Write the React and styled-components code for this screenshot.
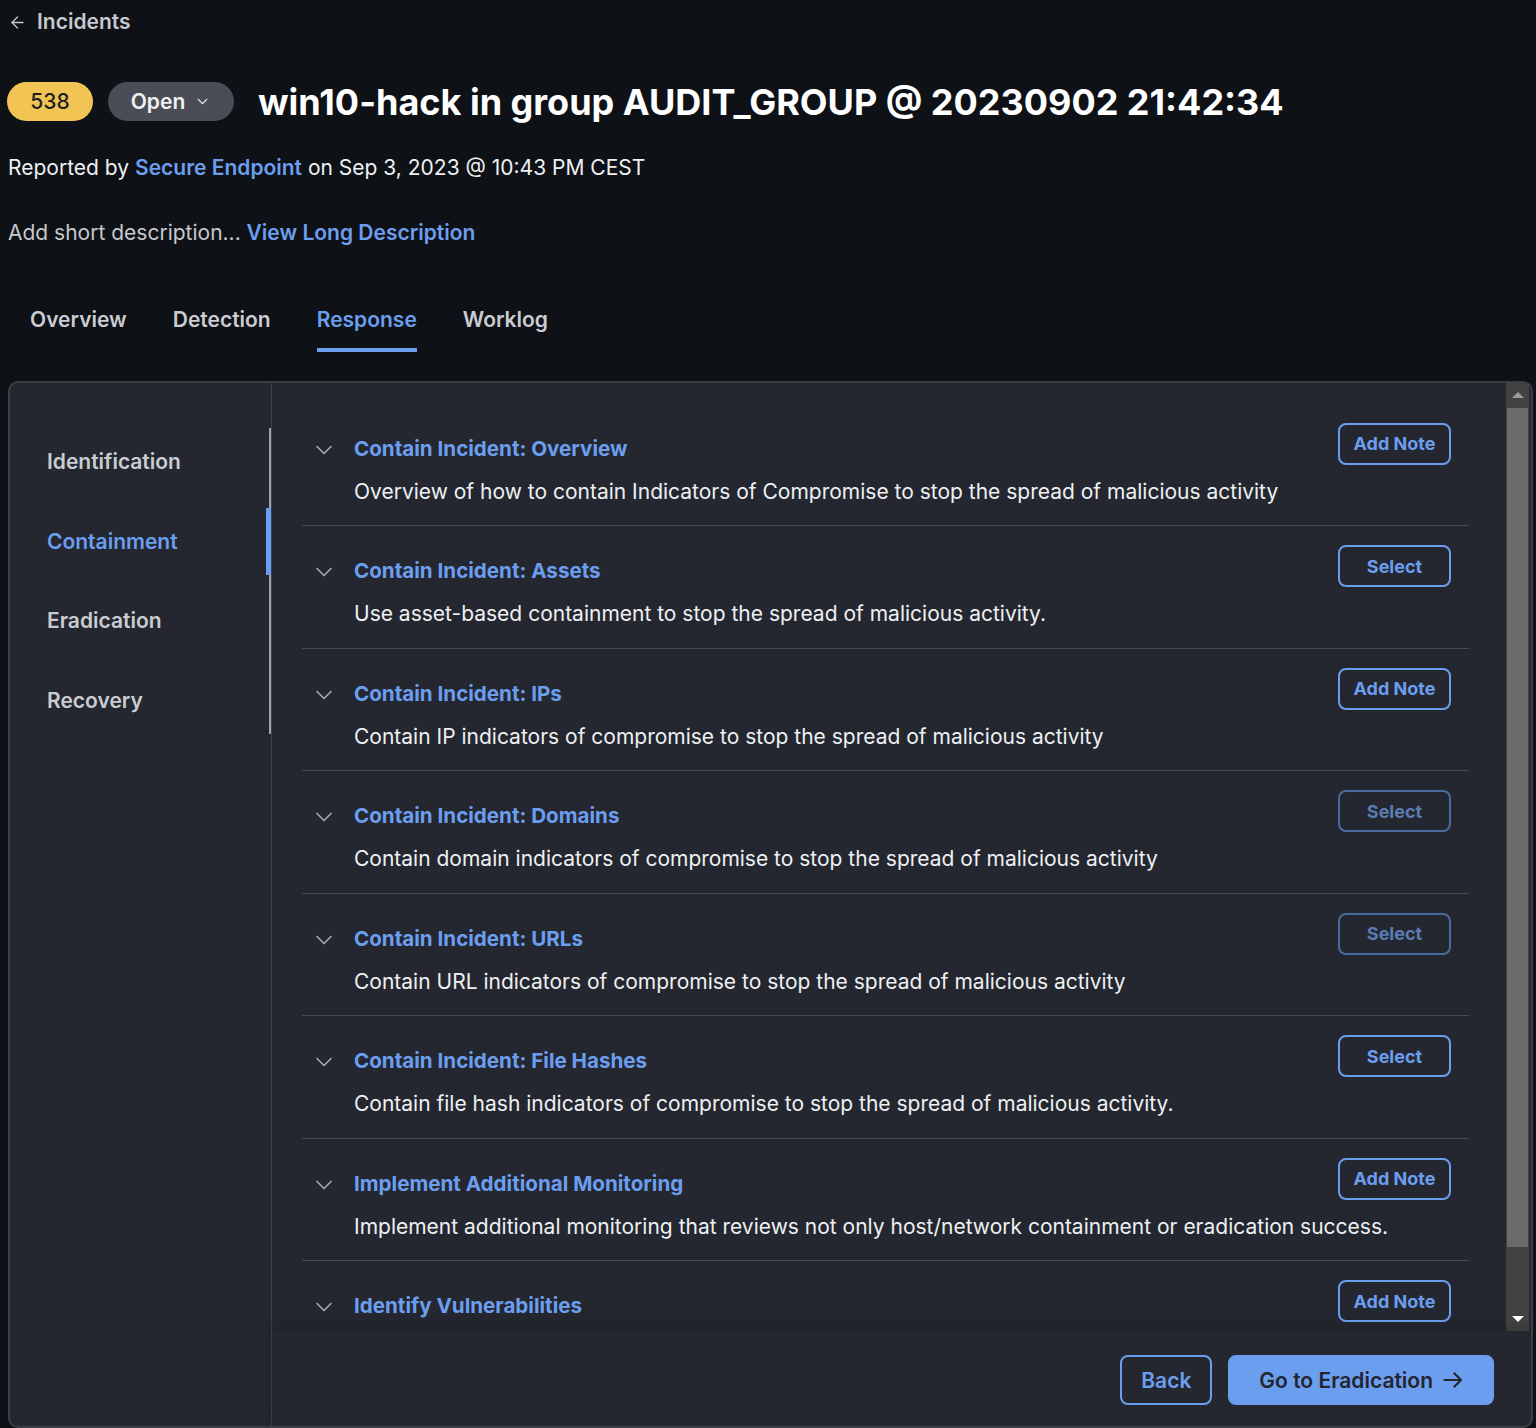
import React from 'react';
import styled, { createGlobalStyle } from 'styled-components';
import { ArrowLeft, ChevronDown } from 'lucide-react';

const GlobalStyle = createGlobalStyle`
    * { box-sizing: border-box; }
    html, body {
        margin: 0;
        background: #0e1115;
        font-family: Inter, "Noto Sans", sans-serif;
        color: #eef0f3;
    }
`;

const steps = [
    {
        title: 'Contain Incident: Overview',
        text: 'Overview of how to contain Indicators of Compromise to stop the spread of malicious activity',
        action: 'Add Note',
    },
    {
        title: 'Contain Incident: Assets',
        text: 'Use asset-based containment to stop the spread of malicious activity.',
        action: 'Select',
    },
    {
        title: 'Contain Incident: IPs',
        text: 'Contain IP indicators of compromise to stop the spread of malicious activity',
        action: 'Add Note',
    },
    {
        title: 'Contain Incident: Domains',
        text: 'Contain domain indicators of compromise to stop the spread of malicious activity',
        action: 'Select',
        disabled: true,
    },
    {
        title: 'Contain Incident: URLs',
        text: 'Contain URL indicators of compromise to stop the spread of malicious activity',
        action: 'Select',
        disabled: true,
    },
    {
        title: 'Contain Incident: File Hashes',
        text: 'Contain file hash indicators of compromise to stop the spread of malicious activity.',
        action: 'Select',
    },
    {
        title: 'Implement Additional Monitoring',
        text: 'Implement additional monitoring that reviews not only host/network containment or eradication success.',
        action: 'Add Note',
    },
    {
        title: 'Identify Vulnerabilities',
        text: 'Identify vulnerabilities that were exploited during the incident.',
        action: 'Add Note',
    },
];

const phases = ['Identification', 'Containment', 'Eradication', 'Recovery'];
const tabs = ['Overview', 'Detection', 'Response', 'Worklog'];

const Page = styled.div`
    padding: 8px 3px 0 8px;
`;

const BackLink = styled.a`
    display: inline-flex;
    align-items: center;
    gap: 10px;
    color: #c6c9ce;
    font-size: 21px;
    font-weight: 600;
    line-height: 28px;
    text-decoration: none;
    svg { color: #c6c9ce; }
`;

const HeadRow = styled.div`
    display: flex;
    align-items: center;
    margin-top: 46px;
    height: 39px;
`;

const Badge = styled.span`
    display: inline-flex;
    align-items: center;
    justify-content: center;
    height: 39px;
    width: 86px;
    margin-left: -1px;
    border-radius: 20px;
    background: #f1c453;
    color: #1f1f1f;
    font-size: 21px;
    font-weight: 500;
`;

const StatusPill = styled.button`
    display: inline-flex;
    align-items: center;
    justify-content: center;
    gap: 9px;
    height: 39px;
    width: 126px;
    margin-left: 15px;
    border: none;
    border-radius: 20px;
    background: #4a4d55;
    color: #eef0f3;
    font-family: inherit;
    font-size: 21px;
    font-weight: 600;
`;

const Title = styled.h1`
    margin: 0 0 0 24px;
    font-size: 36px;
    font-weight: 700;
    line-height: 44px;
    color: #ffffff;
`;

const Reported = styled.p`
    margin: 33px 0 0;
    font-size: 21px;
    line-height: 28px;
    color: #eef0f3;
`;

const Link = styled.a`
    color: #6c9ef0;
    font-weight: 600;
    text-decoration: none;
`;

const ShortDesc = styled.p`
    margin: 37px 0 0;
    font-size: 21px;
    line-height: 28px;
    color: #c6c9ce;
`;

const Tabs = styled.nav`
    display: flex;
    gap: 46px;
    margin-top: 59px;
    padding-left: 22px;
`;

const Tab = styled.span`
    font-size: 21px;
    font-weight: 600;
    line-height: 28px;
    padding-bottom: 14px;
    color: ${(p) => (p.$active ? '#6c9ef0' : '#c9ccd1')};
    border-bottom: 4px solid ${(p) => (p.$active ? '#6c9ef0' : 'transparent')};
`;

const Panel = styled.section`
    display: flex;
    margin-top: 29px;
    height: 1047px;
    background: #24272f;
    border: 2px solid #3b3e45;
    border-radius: 10px;
    overflow: hidden;
`;

const Sidebar = styled.aside`
    width: 261px;
    flex: none;
    padding-top: 45px;
`;

const PhaseNav = styled.ul`
    list-style: none;
    margin: 0;
    padding: 0;
    display: flex;
    flex-direction: column;
    gap: 12.7px;
    border-right: 2px solid #9ea2a9;
`;

const Phase = styled.li`
    position: relative;
    height: 67px;
    display: flex;
    align-items: center;
    padding-left: 37px;
    font-size: 21px;
    font-weight: 600;
    color: ${(p) => (p.$active ? '#6c9ef0' : '#c9ccd1')};
    &::after {
        content: '';
        display: ${(p) => (p.$active ? 'block' : 'none')};
        position: absolute;
        top: 0;
        bottom: 0;
        right: -2px;
        width: 5px;
        background: #6c9ef0;
    }
`;

const Main = styled.div`
    flex: 1;
    display: flex;
    flex-direction: column;
    border-left: 1px solid #3d4048;
    min-width: 0;
`;

const ScrollArea = styled.div`
    display: flex;
    height: 948px;
    flex: none;
`;

const StepList = styled.div`
    flex: 1;
    overflow: hidden;
    padding: 20.5px 37px 0 30px;
`;

const Step = styled.div`
    display: grid;
    grid-template-columns: 52px 1fr;
    padding: 19px 18px 19.5px 0;
    border-bottom: 1px solid #474a52;
`;

const Chevron = styled(ChevronDown)`
    margin: 13px 0 0 8px;
    color: #a3a7ae;
`;

const StepHead = styled.div`
    display: flex;
    justify-content: space-between;
    align-items: flex-start;
`;

const StepTitle = styled.h3`
    margin: 12px 0 0;
    font-size: 20.6px;
    font-weight: 700;
    line-height: 28px;
    color: #6c9ef0;
`;

const StepText = styled.p`
    grid-column: 2;
    margin: 13px 0 0;
    font-size: 21px;
    line-height: 28px;
    color: #eef0f3;
`;

const OutlineButton = styled.button`
    height: 42px;
    width: 113px;
    border: 2px solid ${(p) => (p.disabled ? '#4a6b9f' : '#6c9ef0')};
    border-radius: 8px;
    background: transparent;
    color: ${(p) => (p.disabled ? '#5a7cb3' : '#6c9ef0')};
    font-family: inherit;
    font-size: 18px;
    font-weight: 700;
`;

const ScrollTrack = styled.div`
    width: 23px;
    flex: none;
    margin-right: 2px;
    background: #424242;
    display: flex;
    flex-direction: column;
    align-items: center;
`;

const ScrollButton = styled.div`
    height: 24px;
    display: flex;
    align-items: center;
    justify-content: center;
    &::before {
        content: '';
        border-left: 6px solid transparent;
        border-right: 6px solid transparent;
        ${(p) => (p.$down ? 'border-top: 6px solid #ffffff;' : 'border-bottom: 6px solid #9b9b9b;')}
    }
`;

const Thumb = styled.div`
    width: 21px;
    height: 839px;
    margin-top: 1px;
    background: #6a6a6a;
`;

const TrackRest = styled.div`
    flex: 1;
`;

const Footer = styled.div`
    flex: 1;
    display: flex;
    justify-content: flex-end;
    align-items: flex-start;
    gap: 16px;
    padding: 24px 37px 0 0;
    box-shadow: 0 -6px 10px rgba(0, 0, 0, 0.12);
    position: relative;
`;

const FooterButton = styled.button`
    display: inline-flex;
    align-items: center;
    gap: 10px;
    height: 50px;
    padding: 0 ${(p) => (p.$primary ? '29px' : '19px')};
    border: 2px solid #6c9ef0;
    border-radius: 8px;
    background: ${(p) => (p.$primary ? '#6c9ef0' : 'transparent')};
    color: ${(p) => (p.$primary ? '#23262e' : '#6c9ef0')};
    font-family: inherit;
    font-size: 21px;
    font-weight: 600;
`;

const RightArrow = () => (
    <svg width="20" height="16" viewBox="0 0 20 16" fill="none" stroke="currentColor" strokeWidth="2.2" strokeLinecap="round" strokeLinejoin="round">
        <path d="M1.5 8h16.5M11.5 1.5 18 8l-6.5 6.5" />
    </svg>
);

export default function App() {
    return (
        <>
            <GlobalStyle />
            <Page>
                <BackLink href="#">
                    <ArrowLeft size={19} strokeWidth={1.6} />
                    Incidents
                </BackLink>
                <HeadRow>
                    <Badge>538</Badge>
                    <StatusPill>
                        Open <ChevronDown size={17} strokeWidth={1.8} />
                    </StatusPill>
                    <Title>win10-hack in group AUDIT_GROUP @ 20230902 21:42:34</Title>
                </HeadRow>
                <Reported>
                    Reported by <Link href="#">Secure Endpoint</Link> on Sep 3, 2023 @ 10:43 PM CEST
                </Reported>
                <ShortDesc>
                    Add short description... <Link href="#">View Long Description</Link>
                </ShortDesc>
                <Tabs>
                    {tabs.map((t) => (
                        <Tab key={t} $active={t === 'Response'}>
                            {t}
                        </Tab>
                    ))}
                </Tabs>
                <Panel>
                    <Sidebar>
                        <PhaseNav>
                            {phases.map((p) => (
                                <Phase key={p} $active={p === 'Containment'}>
                                    {p}
                                </Phase>
                            ))}
                        </PhaseNav>
                    </Sidebar>
                    <Main>
                        <ScrollArea>
                            <StepList>
                                {steps.map((s) => (
                                    <Step key={s.title}>
                                        <Chevron size={28} strokeWidth={1.5} />
                                        <StepHead>
                                            <StepTitle>{s.title}</StepTitle>
                                            <OutlineButton disabled={s.disabled}>{s.action}</OutlineButton>
                                        </StepHead>
                                        <StepText>{s.text}</StepText>
                                    </Step>
                                ))}
                            </StepList>
                            <ScrollTrack>
                                <ScrollButton />
                                <Thumb />
                                <TrackRest />
                                <ScrollButton $down />
                            </ScrollTrack>
                        </ScrollArea>
                        <Footer>
                            <FooterButton>Back</FooterButton>
                            <FooterButton $primary>
                                Go to Eradication <RightArrow />
                            </FooterButton>
                        </Footer>
                    </Main>
                </Panel>
            </Page>
        </>
    );
}
